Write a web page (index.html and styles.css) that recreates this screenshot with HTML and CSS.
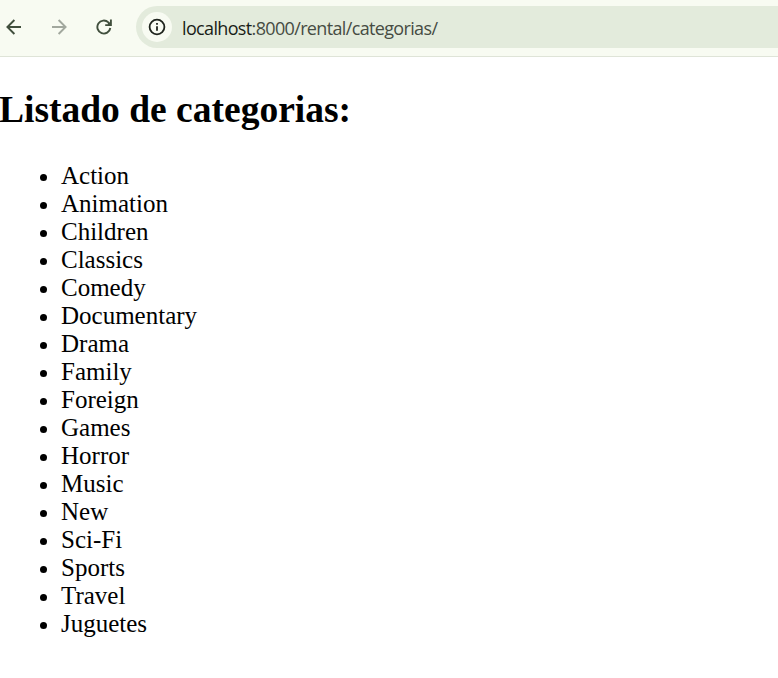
FILE: index.html
```html
<!DOCTYPE html>
<html lang="es">
<head>
<meta charset="utf-8">
<title>Categorias</title>
<link rel="stylesheet" href="styles.css">
</head>
<body>
<header class="toolbar">
  <svg class="nav back" viewBox="0 0 16 16"><path d="M15 8H2M8.4 1 1.4 8 8.4 15"/></svg>
  <svg class="nav forward" viewBox="0 0 16 16"><path d="M1 8h13M7.6 1 14.6 8 7.6 15"/></svg>
  <svg class="nav reload" viewBox="0 0 16 16"><path d="M14.3 9A6.5 6.5 0 1 1 12.4 3.4L14.4 5.4M14.9.4v5.7H9.2M11.8 5.2h2.6"/></svg>
  <div class="address">
    <span class="info"><svg viewBox="0 0 18 18"><circle cx="9" cy="9" r="7.4"/><path d="M9 8.2v4.6M9 5v1.8"/></svg></span>
    <span class="url"><span class="host">localhost</span>:8000/rental/categorias/</span>
  </div>
</header>
<main class="page">
  <h1>Listado de categorias:</h1>
  <ul>
    <li>Action</li>
    <li>Animation</li>
    <li>Children</li>
    <li>Classics</li>
    <li>Comedy</li>
    <li>Documentary</li>
    <li>Drama</li>
    <li>Family</li>
    <li>Foreign</li>
    <li>Games</li>
    <li>Horror</li>
    <li>Music</li>
    <li>New</li>
    <li>Sci-Fi</li>
    <li>Sports</li>
    <li>Travel</li>
    <li>Juguetes</li>
  </ul>
</main>
</body>
</html>
```
FILE: styles.css
```css
body {
  margin: 0;
  background: #fff;
  color: #000;
  overflow: hidden;
}
.toolbar {
  box-sizing: border-box;
  height: 57px;
  padding: 6px 0 8px 6px;
  display: flex;
  align-items: center;
  background: #f8fbf2;
  border-bottom: 1px solid #dfe4d8;
}
.nav {
  width: 16px;
  height: 16px;
  flex: none;
  fill: none;
  stroke: #414f3d;
  stroke-width: 1.9;
}
.forward { margin-left: 29px; stroke: #a2a89e; }
.reload { margin-left: 29px; }
.address {
  flex: 1;
  height: 42px;
  margin-left: 24px;
  padding-left: 6px;
  display: flex;
  align-items: center;
  background: #e3ebdc;
  border-radius: 21px 0 0 21px;
}
.info {
  width: 30px;
  height: 30px;
  display: grid;
  place-items: center;
  border-radius: 50%;
  background: #f8fbf2;
}
.info svg {
  width: 18px;
  height: 18px;
  fill: none;
  stroke: #1f241d;
  stroke-width: 1.8;
}
.url {
  margin: 1px 0 0 10px;
  font: 18px "Open Sans", sans-serif;
  letter-spacing: -0.65px;
  color: #464c43;
}
.host { color: #191d17; }
.page { font-family: "Liberation Serif", serif; }
h1 {
  margin: 31px 0 0 -1px;
  font-size: 37.5px;
  line-height: 43px;
}
ul {
  margin: 31px 0 0;
  padding-left: 61px;
  font-size: 25px;
  line-height: 28px;
}
```
